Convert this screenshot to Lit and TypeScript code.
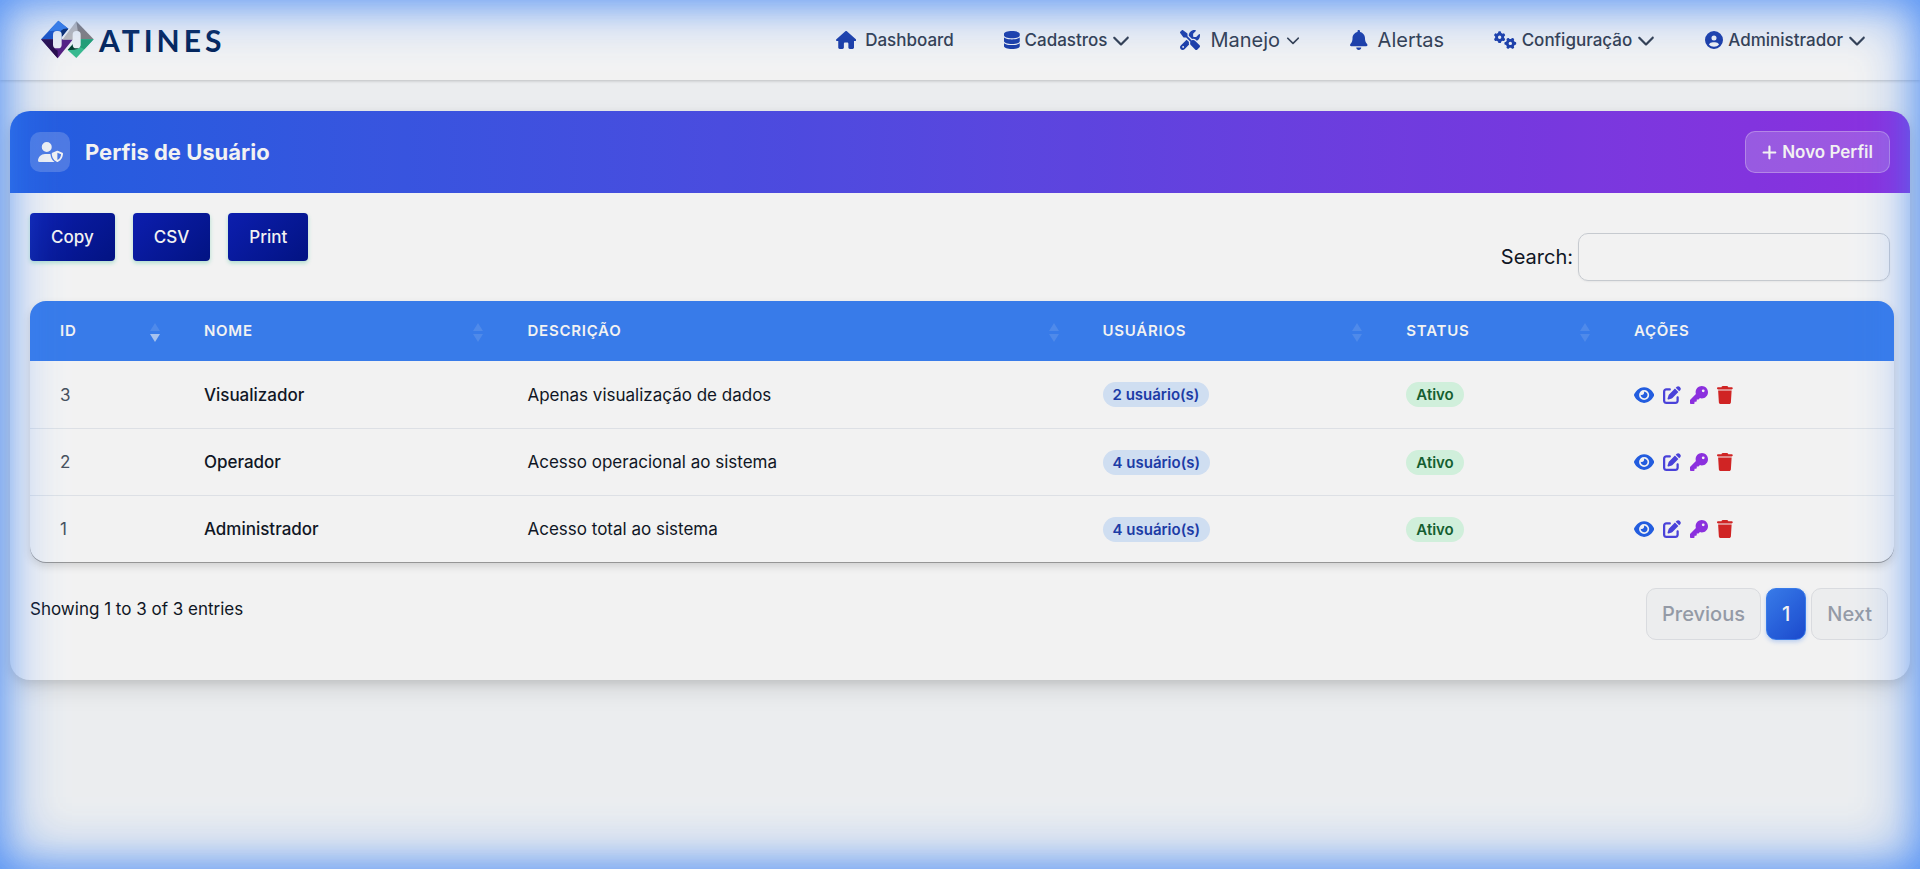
import { LitElement, html, css, svg, nothing } from "lit";
import { customElement } from "lit/decorators.js";

type Icon = { box: string; path: string };

const icons: Record<string, Icon> = {
  house: { box: "0 0 576 512", path: "M575.8 255.5c0 18-15 32.100-32 32.100h-32l.7 160.200c0 2.700-.2 5.400-.5 8.100V472c0 22.100-17.900 40-40 40h-16c-1.100 0-2.200 0-3.300-.1c-1.400 .1-2.800 .1-4.200 .1H392c-22.100 0-40-17.900-40-40V360c0-17.700-14.300-32-32-32H256c-17.700 0-32 14.300-32 32v112c0 22.100-17.900 40-40 40h-56c-1.500 0-3-.1-4.500-.2c-1.200 .1-2.400 .2-3.600 .2H104c-22.100 0-40-17.900-40-40V360c0-.9 0-1.900 .1-2.800V287.600H32c-18 0-32-14-32-32.100c0-9 3-17 10-24L266.400 8c7-7 15-8 22-8s15 2 21 7L564.800 231.500c8 7 12 15 11 24z" },
  database: { box: "0 0 448 512", path: "M448 80v48c0 44.200-100.300 80-224 80S0 172.200 0 128V80C0 35.800 100.300 0 224 0S448 35.800 448 80zM393.200 214.700c20.800-7.400 39.900-16.900 54.800-28.600V288c0 44.200-100.300 80-224 80S0 332.200 0 288V186.100c14.900 11.800 34 21.200 54.800 28.600C99.700 230.700 159.500 240 224 240s124.300-9.300 169.200-25.300zM0 346.100c14.900 11.800 34 21.200 54.800 28.600C99.700 390.700 159.500 400 224 400s124.300-9.300 169.200-25.300c20.800-7.400 39.900-16.900 54.800-28.600V432c0 44.200-100.300 80-224 80S0 476.200 0 432V346.100z" },
  tools: { box: "0 0 512 512", path: "M78.600 5C69.100-2.400 55.600-1.500 47 7L7 47c-8.500 8.500-9.400 22-2.100 31.600l80 104c4.500 5.900 11.600 9.400 19 9.400h54.100l109 109c-14.700 29-10 65.400 14.300 89.600l112 112c12.500 12.500 32.800 12.500 45.300 0l64-64c12.500-12.500 12.500-32.800 0-45.300l-112-112c-24.200-24.200-60.600-29-89.600-14.300l-109-109V104c0-7.500-3.500-14.500-9.400-19L78.600 5zM19.900 396.100C7.200 408.800 0 426.100 0 444.100C0 481.600 30.400 512 67.900 512c18 0 35.300-7.200 48-19.900L233.700 374.300c-7.800-20.900-9-43.600-3.600-65.100l-61.700-61.700L19.900 396.100zM512 144c0-10.500-1.100-20.700-3.200-30.500c-2.400-11.200-16.100-14.100-24.200-6l-63.900 63.900c-3 3-7.100 4.700-11.300 4.700H352c-8.800 0-16-7.200-16-16V102.600c0-4.200 1.700-8.300 4.700-11.300l63.900-63.900c8.100-8.100 5.200-21.800-6-24.200C388.700 1.100 378.500 0 368 0C288.500 0 224 64.500 224 144l0 .8 85.300 85.300c36-9.100 75.800 .5 104 28.700L429 274.500c49-23 83-72.800 83-130.500zM56 432a24 24 0 1 1 48 0 24 24 0 1 1 -48 0z" },
  bell: { box: "0 0 448 512", path: "M224 0c-17.700 0-32 14.300-32 32V51.200C119 66 64 130.600 64 208v18.800c0 47-17.300 92.400-48.500 127.600l-7.400 8.300c-8.400 9.400-10.400 22.900-5.300 34.400S19.400 416 32 416H416c12.600 0 24-7.400 29.200-18.900s3.100-25-5.300-34.400l-7.400-8.300C401.300 319.200 384 273.900 384 226.800V208c0-77.400-55-142-128-156.800V32c0-17.700-14.300-32-32-32zm45.300 493.300c12-12 18.700-28.300 18.700-45.300H160c0 17 6.700 33.300 18.700 45.300s28.300 18.700 45.300 18.700s33.300-6.700 45.300-18.700z" },
  gears: { box: "0 0 640 512", path: "M308.500 135.300c7.100-6.300 9.900-16.200 6.200-25c-2.300-5.300-4.800-10.500-7.600-15.500L304 89.400c-3-5-6.300-9.900-9.800-14.600c-5.700-7.600-15.700-10.100-24.700-7.100l-28.200 9.300c-10.700-8.800-23-16-36.200-20.900L199 27.100c-1.900-9.300-9.100-16.700-18.500-17.800C173.900 8.400 167.200 8 160.400 8h-.7c-6.800 0-13.500 .4-20.100 1.200c-9.400 1.100-16.600 8.600-18.500 17.800L115 56.100c-13.300 5-25.500 12.100-36.200 20.900L50.500 67.800c-9-3-19-.5-24.700 7.100c-3.500 4.700-6.800 9.600-9.900 14.600l-3 5.300c-2.800 5-5.300 10.200-7.600 15.600c-3.700 8.700-.9 18.600 6.200 25l22.200 19.800C32.600 161.900 32 168.900 32 176s.6 14.100 1.700 20.900L11.500 216.700c-7.100 6.300-9.900 16.200-6.200 25c2.300 5.300 4.800 10.500 7.600 15.600l3 5.200c3 5.100 6.300 9.900 9.900 14.600c5.700 7.600 15.700 10.100 24.700 7.100l28.200-9.300c10.700 8.800 23 16 36.200 20.900l6.100 29.100c1.900 9.300 9.100 16.700 18.500 17.800c6.700 .8 13.500 1.200 20.400 1.200s13.700-.4 20.400-1.200c9.400-1.100 16.600-8.600 18.500-17.800l6.100-29.100c13.300-5 25.500-12.100 36.200-20.900l28.200 9.300c9 3 19 .5 24.700-7.100c3.500-4.700 6.800-9.500 9.800-14.600l3.100-5.400c2.800-5 5.300-10.200 7.600-15.500c3.700-8.700 .9-18.600-6.200-25l-22.200-19.800c1.100-6.800 1.700-13.800 1.700-20.900s-.6-14.100-1.700-20.900l22.200-19.800zM112 176a48 48 0 1 1 96 0 48 48 0 1 1 -96 0zM504.700 500.500c6.300 7.100 16.200 9.900 25 6.200c5.300-2.300 10.500-4.800 15.500-7.600l5.400-3.100c5-3 9.900-6.300 14.600-9.800c7.600-5.700 10.100-15.700 7.100-24.700l-9.300-28.200c8.800-10.700 16-23 20.900-36.200l29.100-6.100c9.300-1.900 16.700-9.100 17.800-18.500c.8-6.700 1.200-13.500 1.200-20.400s-.4-13.700-1.200-20.400c-1.100-9.400-8.600-16.600-17.800-18.500L583.900 307c-5-13.300-12.100-25.500-20.900-36.200l9.300-28.200c3-9 .5-19-7.100-24.700c-4.700-3.500-9.600-6.800-14.600-9.900l-5.300-3c-5-2.800-10.200-5.300-15.600-7.600c-8.700-3.700-18.600-.9-25 6.200l-19.800 22.200c-6.800-1.100-13.800-1.700-20.900-1.700s-14.100 .6-20.900 1.700l-19.800-22.200c-6.300-7.100-16.200-9.900-25-6.200c-5.300 2.300-10.500 4.800-15.600 7.600l-5.200 3c-5.100 3-9.900 6.300-14.600 9.900c-7.600 5.700-10.100 15.700-7.100 24.700l9.300 28.200c-8.800 10.700-16 23-20.900 36.200L315.100 313c-9.300 1.900-16.700 9.100-17.800 18.500c-.8 6.700-1.200 13.500-1.200 20.400s.4 13.700 1.200 20.400c1.100 9.400 8.600 16.600 17.800 18.500l29.100 6.100c5 13.300 12.100 25.500 20.900 36.200l-9.300 28.200c-3 9-.5 19 7.100 24.700c4.700 3.500 9.500 6.800 14.600 9.800l5.400 3.100c5 2.800 10.200 5.300 15.500 7.600c8.700 3.700 18.600 .9 25-6.200l19.800-22.200c6.800 1.100 13.800 1.700 20.900 1.700s14.100-.6 20.900-1.700l19.800 22.200zM464 304a48 48 0 1 1 0 96 48 48 0 1 1 0-96z" },
  userCircle: { box: "0 0 512 512", path: "M399 384.200C376.900 345.800 335.400 320 288 320H224c-47.400 0-88.900 25.800-111 64.200c35.200 39.200 86.200 63.800 143 63.800s107.800-24.700 143-63.800zM0 256a256 256 0 1 1 512 0A256 256 0 1 1 0 256zm256 16a72 72 0 1 0 0-144 72 72 0 1 0 0 144z" },
  userShield: { box: "0 0 640 512", path: "M224 256A128 128 0 1 0 224 0a128 128 0 1 0 0 256zm-45.700 48C79.800 304 0 383.800 0 482.300C0 498.700 13.300 512 29.700 512H418.300c1.800 0 3.500-.2 5.300-.5c-76.300-55.100-99.800-141-103.100-200.200c-16.100-4.800-33.100-7.300-50.700-7.300H178.300zm308.800-78.300l-120 48C358 277.400 352 286.200 352 296c0 63.300 25.900 168.800 134.800 214.200c5.900 2.500 12.600 2.500 18.500 0C614.100 464.800 640 359.300 640 296c0-9.800-6-18.600-15.100-22.300l-120-48c-5.700-2.300-12.100-2.300-17.800 0zM591.400 312c-3.900 50.700-27.200 116.700-95.400 149.700V273.800L591.400 312z" },
  chevron: { box: "0 0 512 512", path: "M233.400 406.600c12.500 12.500 32.800 12.500 45.300 0l192-192c12.500-12.500 12.500-32.800 0-45.300s-32.800-12.500-45.300 0L256 338.700 86.600 169.400c-12.500-12.500-32.800-12.500-45.300 0s-12.500 32.800 0 45.300l192 192z" },
  plus: { box: "0 0 448 512", path: "M256 80c0-17.700-14.300-32-32-32s-32 14.300-32 32V224H48c-17.700 0-32 14.300-32 32s14.300 32 32 32H192V432c0 17.700 14.300 32 32 32s32-14.300 32-32V288H400c17.700 0 32-14.300 32-32s-14.300-32-32-32H256V80z" },
  eye: { box: "0 0 576 512", path: "M288 32c-80.800 0-145.500 36.800-192.600 80.600C48.600 156 17.300 208 2.500 243.700c-3.300 7.900-3.300 16.700 0 24.600C17.300 304 48.600 356 95.400 399.400C142.500 443.200 207.200 480 288 480s145.500-36.800 192.600-80.600c46.800-43.500 78.100-95.400 93-131.100c3.300-7.900 3.300-16.700 0-24.600c-14.900-35.700-46.200-87.700-93-131.100C433.500 68.800 368.800 32 288 32zM144 256a144 144 0 1 1 288 0 144 144 0 1 1 -288 0zm144-64c0 35.300-28.700 64-64 64c-7.100 0-13.900-1.200-20.300-3.300c-5.500-1.800-11.900 1.600-11.700 7.400c.3 6.900 1.300 13.800 3.200 20.700c13.700 51.200 66.400 81.600 117.600 67.900s81.600-66.400 67.900-117.600c-11.100-41.500-47.800-69.400-88.600-71.100c-5.800-.2-9.200 6.100-7.400 11.700c2.100 6.400 3.300 13.200 3.300 20.300z" },
  edit: { box: "0 0 512 512", path: "M471.600 21.400c-21.900-21.900-57.300-21.900-79.200 0L362.300 51.700l97.900 97.900 30.100-30.100c21.900-21.900 21.900-57.300 0-79.200L471.600 21.400zm-299.200 220c-6.100 6.100-10.800 13.600-13.500 21.900l-29.600 88.800c-2.900 8.600-.6 18.100 5.800 24.600s15.900 8.700 24.600 5.800l88.800-29.600c8.200-2.700 15.700-7.400 21.900-13.500L437.700 172.300 339.700 74.300 172.400 241.400zM96 64C43 64 0 107 0 160V416c0 53 43 96 96 96H352c53 0 96-43 96-96V320c0-17.700-14.300-32-32-32s-32 14.300-32 32v96c0 17.700-14.300 32-32 32H96c-17.700 0-32-14.300-32-32V160c0-17.700 14.300-32 32-32h96c17.700 0 32-14.300 32-32s-14.300-32-32-32H96z" },
  key: { box: "0 0 512 512", path: "M336 352c97.200 0 176-78.800 176-176S433.200 0 336 0S160 78.800 160 176c0 18.700 2.900 36.800 8.300 53.700L7 391c-4.500 4.500-7 10.600-7 17v80c0 13.300 10.700 24 24 24h80c13.300 0 24-10.700 24-24V448h40c13.300 0 24-10.700 24-24V384h40c6.400 0 12.500-2.500 17-7l33.300-33.300c16.900 5.400 35 8.300 53.700 8.300zM376 96a40 40 0 1 1 0 80 40 40 0 1 1 0-80z" },
  trash: { box: "0 0 448 512", path: "M135.200 17.700L128 32H32C14.300 32 0 46.300 0 64S14.300 96 32 96H416c17.700 0 32-14.300 32-32s-14.300-32-32-32H320l-7.200-14.300C307.400 6.800 296.300 0 284.200 0H163.800c-12.100 0-23.200 6.800-28.600 17.700zM416 128H32L53.200 467c1.600 25.300 22.600 45 47.900 45H346.900c25.300 0 46.300-19.700 47.900-45L416 128z" },
};

const icon = (name: string, cls = "") => svg`<svg class="icon ${cls}" viewBox=${icons[name].box} aria-hidden="true"><path d=${icons[name].path}></path></svg>`;

const menu = [
  { label: "Dashboard", icon: "house", kind: "spaced", arrow: false },
  { label: "Cadastros", icon: "database", kind: "", arrow: true },
  { label: "Manejo", icon: "tools", kind: "large", arrow: true },
  { label: "Alertas", icon: "bell", kind: "large", arrow: false },
  { label: "Configuração", icon: "gears", kind: "", arrow: true },
  { label: "Administrador", icon: "userCircle", kind: "", arrow: true },
];

const columns = [
  { label: "ID", cls: "c-id", sort: "desc" },
  { label: "Nome", cls: "c-name", sort: "both" },
  { label: "Descrição", cls: "c-desc", sort: "both" },
  { label: "Usuários", cls: "c-users", sort: "both" },
  { label: "Status", cls: "c-status", sort: "both" },
  { label: "Ações", cls: "c-actions", sort: "" },
];

const profiles = [
  { id: 3, name: "Visualizador", description: "Apenas visualização de dados", users: 2, status: "Ativo" },
  { id: 2, name: "Operador", description: "Acesso operacional ao sistema", users: 4, status: "Ativo" },
  { id: 1, name: "Administrador", description: "Acesso total ao sistema", users: 4, status: "Ativo" },
];

@customElement("app-root")
export class AppRoot extends LitElement {
  static styles = css`
    :host {
      display: block;
      min-height: 100vh;
      background: #f8fafc;
      color: #111827;
      font-family: Inter, "Liberation Sans", sans-serif;
      font-size: 20px;
      line-height: 28px;
    }
    * { box-sizing: border-box; }
    button, input { font: inherit; color: inherit; }
    button { cursor: pointer; }
    a { color: inherit; text-decoration: none; }
    .icon { display: block; height: 1em; flex: none; fill: currentColor; }

    .glow {
      position: fixed;
      inset: 0;
      z-index: 10;
      pointer-events: none;
      background: rgba(0, 0, 0, 0.05);
      box-shadow: inset 0 0 60px rgba(59, 130, 246, 0.85), inset 0 0 30px rgba(59, 130, 246, 0.4);
    }

    .topbar {
      display: flex;
      align-items: center;
      justify-content: space-between;
      height: 80px;
      padding: 0 54px 0 40px;
      background: #fff;
      box-shadow: 0 1px 3px rgba(0, 0, 0, 0.2);
    }
    .brand { display: flex; align-items: center; gap: 4px; }
    .mark { display: block; width: 55px; height: 40px; }
    .wordmark {
      font-family: Lato, sans-serif;
      font-weight: 700;
      font-size: 30px;
      letter-spacing: 4px;
      color: #04265e;
    }
    .nav { display: flex; align-items: center; gap: 50px; margin: 0; padding: 0; list-style: none; }
    .link { display: flex; align-items: center; gap: 5px; font-size: 17px; font-weight: 500; color: #374151; }
    .link .icon { height: 18px; color: #1e40af; }
    .link .arrow { height: 18px; color: #374151; }
    .spaced { gap: 9px; }
    .large { font-size: 20px; font-weight: 400; gap: 10px; }
    .large .icon { height: 20px; }
    .large .arrow { height: 14px; margin-left: -4px; }

    .card {
      margin: 31px 10px 0;
      border-radius: 20px;
      overflow: hidden;
      background: #fff;
      box-shadow: 0 10px 25px rgba(0, 0, 0, 0.1), 0 4px 10px rgba(0, 0, 0, 0.1);
    }
    .card-head {
      display: flex;
      align-items: center;
      gap: 15px;
      padding: 20px;
      background: linear-gradient(90deg, #2563eb, #9333ea);
      color: #fff;
    }
    .badge {
      display: grid;
      place-items: center;
      width: 40px;
      height: 40px;
      border-radius: 10px;
      background: rgba(255, 255, 255, 0.2);
      font-size: 20px;
    }
    .title { flex: 1; margin: 0; font-size: 22px; font-weight: 700; }
    .new {
      display: flex;
      align-items: center;
      gap: 5px;
      height: 42px;
      padding: 0 16px;
      border: 1px solid rgba(255, 255, 255, 0.3);
      border-radius: 10px;
      background: rgba(255, 255, 255, 0.2);
      font-size: 17px;
      font-weight: 600;
    }
    .new .icon { height: 17px; }

    .card-body { padding: 20px; }
    .tools { display: flex; align-items: flex-start; justify-content: space-between; }
    .exports { display: flex; gap: 18px; }
    .export {
      height: 48px;
      padding: 0 21px;
      border: 0;
      border-radius: 4px;
      background: linear-gradient(135deg, #0d20b8, #03158a);
      box-shadow: 0 2px 4px rgba(16, 185, 129, 0.3);
      color: #fff;
      font-size: 17px;
      font-weight: 500;
    }
    .search { display: flex; align-items: center; gap: 5px; margin-top: 20px; }
    .search-input {
      width: 312px;
      height: 48px;
      padding: 0 16px;
      border: 1px solid #d1d5db;
      border-radius: 10px;
      background: transparent;
      box-shadow: 0 1px 2px rgba(0, 0, 0, 0.05);
    }

    .grid {
      width: calc(100% + 4px);
      margin: 20px 0 26px;
      border-collapse: separate;
      border-spacing: 0;
      table-layout: fixed;
      border-radius: 16px;
      overflow: hidden;
      box-shadow: 0 1px 0 rgba(0, 0, 0, 0.3), 0 4px 8px rgba(0, 0, 0, 0.15);
      text-align: left;
    }
    .c-id { width: 7.72%; }
    .c-name { width: 17.36%; }
    .c-desc { width: 30.85%; }
    .c-users { width: 16.3%; }
    .c-status { width: 12.21%; }
    .th {
      height: 60px;
      padding: 0 12px 0 30px;
      background: #3b82f6;
      color: #fff;
      font-size: 15px;
      font-weight: 600;
      letter-spacing: 0.05em;
      text-transform: uppercase;
    }
    .th-inner { display: flex; align-items: center; justify-content: space-between; }
    .sort { display: grid; gap: 3px; width: 14px; justify-items: center; padding-top: 3px; }
    .up, .down { width: 0; height: 0; border: 5px solid transparent; opacity: 0.13; }
    .up { border-top: 0; border-bottom: 8px solid #fff; }
    .down { border-bottom: 0; border-top: 8px solid #fff; }
    .on { opacity: 0.6; }
    .td { height: 67px; padding: 0 12px 0 30px; font-size: 17px; border-top: 1px solid #e9edf2; }
    .first .td { border-top: 0; }
    .id { color: #4b5563; }
    .name { font-weight: 500; }
    .pill {
      display: block;
      width: fit-content;
      padding: 0 10px;
      border-radius: 13px;
      font-size: 15px;
      line-height: 25px;
      font-weight: 600;
    }
    .blue { background: #dbeafe; color: #1e40af; }
    .green { background: #dcfce7; color: #166534; }
    .actions { display: flex; gap: 9px; }
    .act { display: block; padding: 0; border: 0; background: none; font-size: 18px; line-height: 18px; }
    .view { color: #2563eb; }
    .edit { color: #4f46e5; }
    .key { color: #9333ea; }
    .trash { color: #dc2626; }

    .foot { display: flex; align-items: flex-start; justify-content: space-between; padding-bottom: 20px; }
    .info { padding-top: 7px; font-size: 17px; }
    .pages { display: flex; gap: 5px; padding-right: 2px; }
    .page {
      height: 52px;
      padding: 0 15px;
      border: 1px solid #e5e7eb;
      border-radius: 10px;
      background: #f9fafb;
      color: #9ca3af;
      font-weight: 500;
    }
    .current {
      border-color: #3b82f6;
      background: linear-gradient(135deg, #3b82f6, #1d4ed8);
      box-shadow: 0 2px 4px rgba(59, 130, 246, 0.3);
      color: #fff;
    }
  `;

  private logo() {
    return html`<svg class="mark" viewBox="15 12 165 120" aria-hidden="true">
      <path fill="#1a55cc" d="M18 70 70 14l30 24-20 24v8z"></path>
      <path fill="#3b82f0" d="M40 46 70 14l30 24-20 6H60z"></path>
      <path fill="#0a2a6a" d="M78 44q8-8 22-6L80 64z"></path>
      <path fill="#5b1f86" d="M18 70h96l-46 57z"></path>
      <path fill="#2a0a4a" d="M18 70h40v28l10 6v23z"></path>
      <path fill="#c9c4c0" d="M82 71 124 16l14 34-24 21z"></path>
      <path fill="#8d8580" d="M124 16 176 70h-44z"></path>
      <path fill="#3cc594" d="M176 70 124 126l-26-24 18-20 16-12z"></path>
      <path fill="#25a877" d="M136 70h40l-28 30-12-6z"></path>
      <path fill="#06402c" d="M98 102l16-18 4 10 20-4q-8 14-40 12z"></path>
      <rect x="54" y="45" width="26" height="52" rx="11" fill="#fff"></rect>
      <rect x="113" y="45" width="24" height="52" rx="11" fill="#fff"></rect>
    </svg>`;
  }

  render() {
    return html`
      <header class="topbar">
        <a class="brand" href="#">${this.logo()}<span class="wordmark">ATINES</span></a>
        <nav>
          <ul class="nav">
            ${menu.map((m) => html`<li><a class="link ${m.kind}" href="#">${icon(m.icon)}<span>${m.label}</span>${m.arrow ? icon("chevron", "arrow") : nothing}</a></li>`)}
          </ul>
        </nav>
      </header>
      <main class="card">
        <div class="card-head">
          <span class="badge">${icon("userShield")}</span>
          <h1 class="title">Perfis de Usuário</h1>
          <button class="new" type="button">${icon("plus")}Novo Perfil</button>
        </div>
        <div class="card-body">
          <div class="tools">
            <div class="exports">
              ${["Copy", "CSV", "Print"].map((t) => html`<button class="export" type="button">${t}</button>`)}
            </div>
            <label class="search">Search:<input class="search-input" type="search" /></label>
          </div>
          <table class="grid">
            <thead>
              <tr>
                ${columns.map((c) => html`<th class="th ${c.cls}" scope="col"><div class="th-inner"><span>${c.label}</span>${c.sort
                  ? html`<span class="sort"><i class="up"></i><i class="down ${c.sort === "desc" ? "on" : ""}"></i></span>`
                  : nothing}</div></th>`)}
              </tr>
            </thead>
            <tbody>
              ${profiles.map((p, i) => html`<tr class=${i === 0 ? "first" : ""}>
                <td class="td id">${p.id}</td>
                <td class="td name">${p.name}</td>
                <td class="td">${p.description}</td>
                <td class="td"><span class="pill blue">${p.users} usuário(s)</span></td>
                <td class="td"><span class="pill green">${p.status}</span></td>
                <td class="td"><div class="actions">
                  <button class="act view" type="button" aria-label="Visualizar">${icon("eye")}</button>
                  <button class="act edit" type="button" aria-label="Editar">${icon("edit")}</button>
                  <button class="act key" type="button" aria-label="Permissões">${icon("key")}</button>
                  <button class="act trash" type="button" aria-label="Excluir">${icon("trash")}</button>
                </div></td>
              </tr>`)}
            </tbody>
          </table>
          <div class="foot">
            <div class="info">Showing 1 to 3 of 3 entries</div>
            <div class="pages">
              <button class="page" type="button">Previous</button>
              <button class="page current" type="button">1</button>
              <button class="page" type="button">Next</button>
            </div>
          </div>
        </div>
      </main>
      <div class="glow"></div>
    `;
  }
}
